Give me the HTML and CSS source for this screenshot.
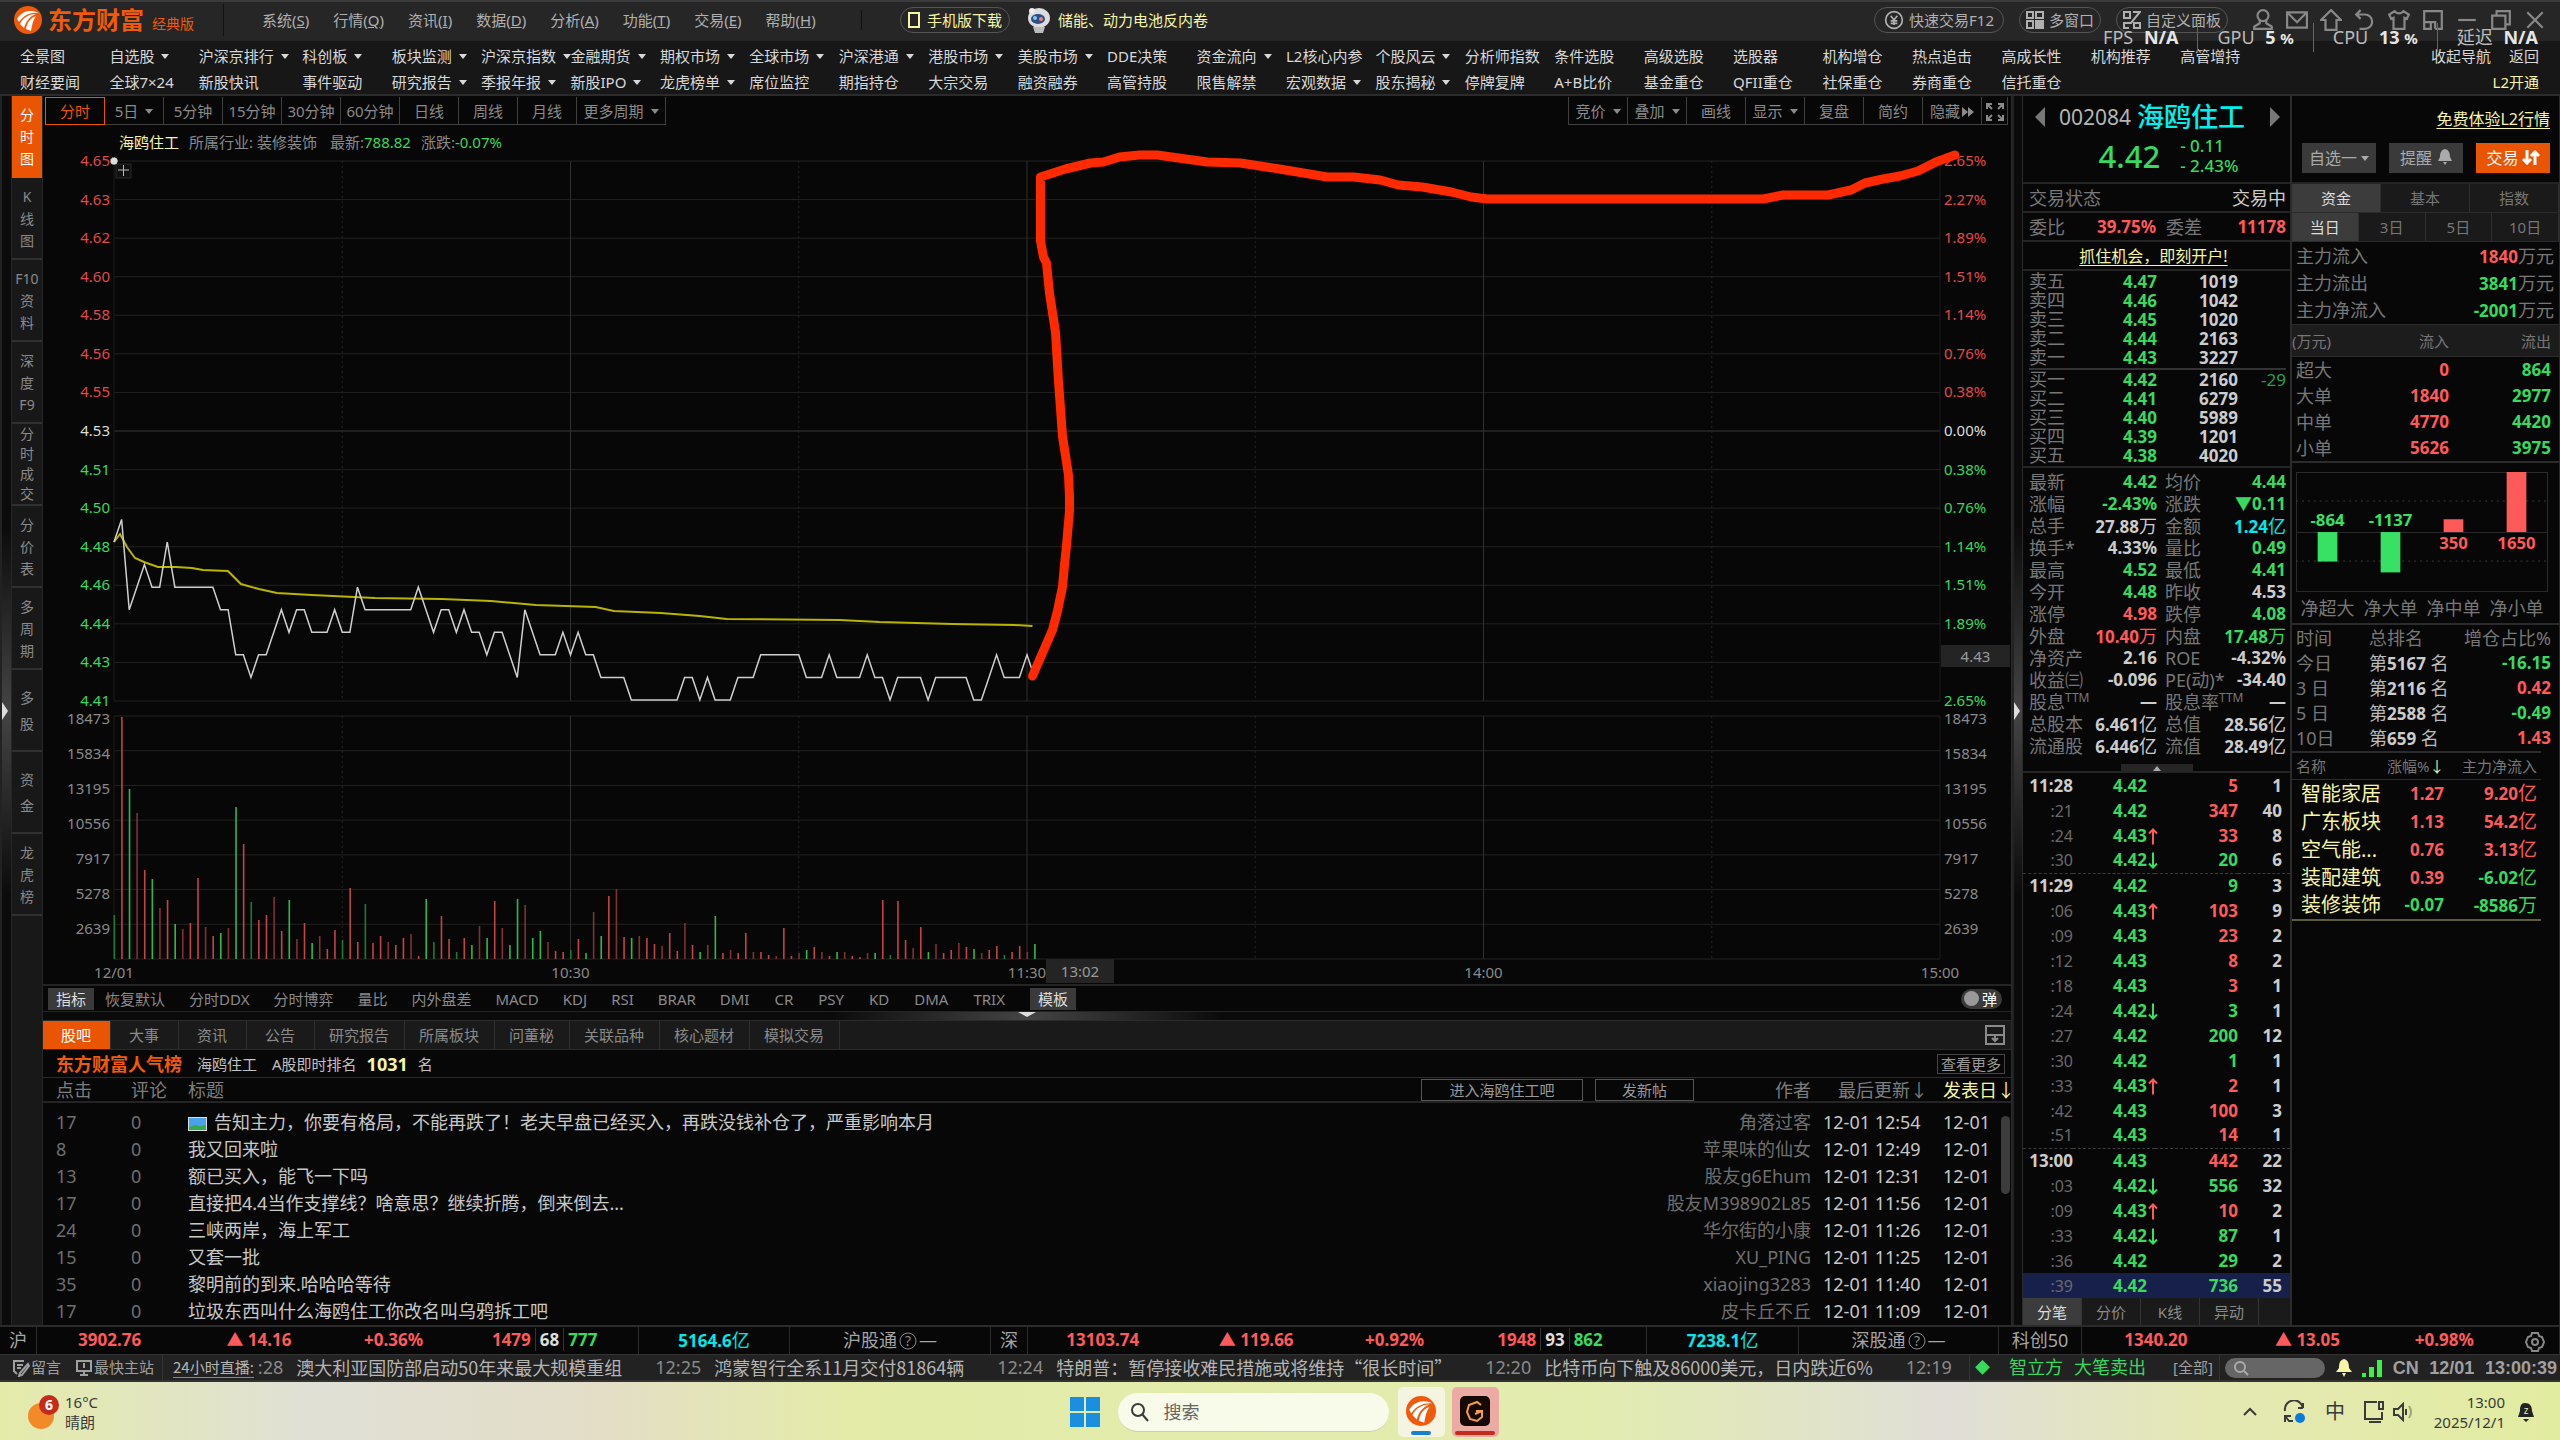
FILE: index.html
```html
<!DOCTYPE html>
<html lang="zh-CN">
<head>
<meta charset="utf-8">
<title>东方财富 经典版 - 海鸥住工 002084</title>
<link rel="stylesheet" href="styles.css">
</head>
<body>
<svg class="defs" aria-hidden="true">
  <symbol id="i-logo" viewBox="0 0 28 28"><circle cx="14" cy="14" r="14" fill="#f05a0a"/><path d="M3 13C8 5 16 3 25 7C17 6 10 9 5 16Z" fill="#fff"/><path d="M6 18C9 11 16 8 22 8C16 10 12 15 10 22Z" fill="#fff"/><path d="M12 23C13 17 16 12 22 10C19 14 18 19 17 25Z" fill="#fff"/></symbol>
  <symbol id="i-chat" viewBox="0 0 24 24"><circle cx="12" cy="12" r="10"/><path d="M8 7l4 5 4-5M12 12v6M8 13h8M8 16h8"/></symbol>
  <symbol id="i-up" viewBox="0 0 10 18"><path d="M5 17V2M1 6l4-4 4 4" fill="none" stroke="#ff5a5a" stroke-width="2"/></symbol>
  <symbol id="i-down" viewBox="0 0 10 18"><path d="M5 1v15M1 12l4 4 4-4" fill="none" stroke="#38e063" stroke-width="2"/></symbol>
</svg>
<div class="app">
  <header class="titlebar">
    <a class="brand" href="#"><svg width="28" height="28"><use href="#i-logo"/></svg><b>东方财富</b><span>经典版</span></a>
    <nav class="menus"><button>系统(<u>S</u>)</button><button>行情(<u>Q</u>)</button><button>资讯(<u>I</u>)</button><button>数据(<u>D</u>)</button><button>分析(<u>A</u>)</button><button>功能(<u>T</u>)</button><button>交易(<u>E</u>)</button><button>帮助(<u>H</u>)</button></nav>
    <button class="pill yellow"><svg width="12" height="16" viewBox="0 0 12 16"><rect x="1" y="1" width="10" height="14" fill="none" stroke="currentColor" stroke-width="2"/></svg>手机版下载</button>
    <a class="hot yellow" href="#"><svg width="26" height="26" viewBox="0 0 26 26"><ellipse cx="13" cy="11" rx="11" ry="10" fill="#dcdcdc"/><ellipse cx="12" cy="12" rx="7" ry="5" fill="#2b4f86"/><circle cx="9" cy="11" r="2" fill="#7cf"/><circle cx="15" cy="12" r="2" fill="#f77"/><path d="M7 20h12l-2 6H9z" fill="#bbb"/><circle cx="6" cy="4" r="3" fill="#eee"/></svg>储能、动力电池反内卷</a>
    <div class="tools">
      <button class="pill"><svg width="20" height="20" viewBox="0 0 24 24" class="ln"><use href="#i-chat"/></svg>快速交易F12</button>
      <button class="pill"><svg width="18" height="18" viewBox="0 0 18 18" class="ln"><rect x="1" y="1" width="6" height="6"/><rect x="10" y="1" width="7" height="6"/><rect x="1" y="10" width="6" height="7"/><rect x="10" y="10" width="7" height="7" fill="currentColor"/></svg>多窗口</button>
      <button class="pill"><svg width="18" height="18" viewBox="0 0 18 18" class="ln"><path d="M1 1h6v6H1zM10 1h7L8 12H1v5h5M11 12h6v5h-6z"/></svg>自定义面板</button>
    </div>
    <div class="winicons">
      <button aria-label="用户"><svg viewBox="0 0 20 20" class="ln"><circle cx="10" cy="6" r="5"/><path d="M7 10v3l-5 3v2h16v-2l-5-3v-3"/></svg></button>
      <button aria-label="邮件"><svg viewBox="0 0 20 20" class="ln"><path d="M1 3h18v14H1zM1 3l9 9 9-9"/></svg></button>
      <button aria-label="上移"><svg viewBox="0 0 20 20" class="ln"><path d="M10 1l9 9h-4v9H5v-9H1z"/></svg></button>
      <button aria-label="撤销"><svg viewBox="0 0 20 20" class="ln"><path d="M6 1L2 5l4 4M2 5h8a6 6 0 0 1 0 13H5"/></svg></button>
      <button aria-label="皮肤"><svg viewBox="0 0 20 20" class="ln"><path d="M6 2L1 5l2 4 2-1v10h10V8l2 1 2-4-5-3q-4 4-8 0z"/></svg></button>
      <button aria-label="小窗"><svg viewBox="0 0 20 20" class="ln"><path d="M2 12V2h16v16h-6M2 12v6h6v-6zM8 12h4v6"/></svg></button>
      <button aria-label="最小化"><svg viewBox="0 0 20 20" class="ln"><path d="M2 10h16"/></svg></button>
      <button aria-label="还原"><svg viewBox="0 0 20 20" class="ln"><path d="M2 6h12v12H2zM6 6V2h12v12h-4"/></svg></button>
      <button aria-label="关闭"><svg viewBox="0 0 20 20" class="ln"><path d="M3 3l14 14M17 3L3 17"/></svg></button>
    </div>
    <div class="perf"><span>FPS <b>N/A</b></span><span>GPU <b>5 <small>%</small></b></span><span>CPU <b>13 <small>%</small></b></span><span>延迟 <b>N/A</b></span></div>
  </header>

  <nav class="nav" id="nav"></nav>

  <main class="desk">
    <div class="vsplit left"></div>
    <nav class="rail"><button class="on">分<br>时<br>图</button><button>K<br>线<br>图</button><button>F10<br>资<br>料</button><button>深<br>度<br>F9</button><button class="four">分<br>时<br>成<br>交</button><button>分<br>价<br>表</button><button>多<br>周<br>期</button><button class="two">多<br>股</button><button class="two">资<br>金</button><button>龙<br>虎<br>榜</button></nav>

    <section class="center">
      <div class="chartbar">
        <div class="group"><button class="on">分时</button><button class="dd">5日</button><button>5分钟</button><button>15分钟</button><button>30分钟</button><button>60分钟</button><button>日线</button><button>周线</button><button>月线</button><button class="dd wide">更多周期</button></div>
        <div class="group"><button class="dd">竞价</button><button class="dd">叠加</button><button>画线</button><button class="dd">显示</button><button>复盘</button><button>简约</button><button>隐藏<svg width="12" height="10" viewBox="0 0 12 10"><path d="M0 0l6 5-6 5zM6 0l6 5-6 5z" fill="currentColor"/></svg></button><button class="sq" aria-label="全屏"><svg width="18" height="18" viewBox="0 0 18 18" class="ln"><path d="M1 6V1h5M12 1h5v5M17 12v5h-5M6 17H1v-5M1 1l5 5M17 1l-5 5M17 17l-5-5M1 17l5-5"/></svg></button></div>
      </div>
      <div class="chartinfo"><b class="yellow">海鸥住工</b><span>所属行业: 装修装饰</span><span class="n">最新:<i class="g">788.82</i></span><span>涨跌:<i class="g">-0.07%</i></span></div>
      <div class="chart">
        <div class="axis l" id="priceAxis"></div>
        <div class="plot price"><svg id="priceSvg" viewBox="0 0 1827 540" preserveAspectRatio="none"></svg></div>
        <div class="axis r" id="pctAxis"></div>
        <div class="axis l vol" id="volL"></div>
        <div class="plot volume"><svg id="volSvg" viewBox="0 0 1827 243" preserveAspectRatio="none"></svg></div>
        <div class="axis r vol" id="volR"></div>
        <div class="times"><span>12/01</span><span>10:30</span><span>11:30</span><span>14:00</span><span>15:00</span><mark>13:02</mark></div>
        <mark class="pricetag">4.43</mark>
      </div>
      <div class="indicators"><button class="on">指标</button><button>恢复默认</button><button>分时DDX</button><button>分时博弈</button><button>量比</button><button>内外盘差</button><button>MACD</button><button>KDJ</button><button>RSI</button><button>BRAR</button><button>DMI</button><button>CR</button><button>PSY</button><button>KD</button><button>DMA</button><button>TRIX</button><button class="on">模板</button><label class="toggle"><input type="checkbox">弹</label></div>
      <div class="hsplit"></div>
      <div class="tabs"><button class="on">股吧</button><button>大事</button><button>资讯</button><button>公告</button><button>研究报告</button><button>所属板块</button><button>问董秘</button><button>关联品种</button><button>核心题材</button><button>模拟交易</button>
        <svg class="dock ln" width="20" height="20" viewBox="0 0 20 20"><path d="M1 1h18v9H1zM1 10v9h18v-9M10 10v6M7 13l3 3 3-3"/></svg></div>
      <div class="rank"><b class="title">东方财富人气榜</b><span>海鸥住工</span><span>A股即时排名</span><b class="yellow num">1031</b><span>名</span><button>查看更多</button></div>
      <div class="posts">
        <table><colgroup><col class="c1"><col class="c2"><col><col class="c4"><col class="c5"><col class="c6"></colgroup>
          <thead><tr><th>点击</th><th>评论</th><th><div class="th3">标题<span><button class="enter">进入海鸥住工吧</button><button>发新帖</button></span></div></th><th class="a">作者</th><th>最后更新↓</th><th class="yellow">发表日↓</th></tr></thead>
          <tbody id="posts"></tbody></table>
        <div class="scroll"></div>
      </div>
    </section>

    <div class="vsplit right"></div>

    <section class="quote">
      <div class="qhead">
        <div class="name"><svg width="10" height="20" viewBox="0 0 10 20"><path d="M10 0v20L0 10z"/></svg><span>002084</span><b>海鸥住工</b><svg width="10" height="20" viewBox="0 0 10 20"><path d="M0 0v20l10-10z"/></svg></div>
        <div class="last"><b>4.42</b><span>- 0.11<br>- 2.43%</span></div>
      </div>
      <div class="kv line"><span>交易状态</span><span class="w">交易中</span></div>
      <div class="kv4 line"><span>委比</span><b class="r">39.75%</b><span>委差</span><b class="r">11178</b></div>
      <div class="ad"><a class="yellow" href="#">抓住机会，即刻开户!</a></div>
      <table class="book" id="sell"></table>
      <table class="book buy" id="buy"></table>
      <div class="stats" id="stats"></div>
      <div class="fold"><button aria-label="收起"></button></div>
      <table class="ticks" id="ticks"></table>
      <div class="qtabs"><button class="on">分笔</button><button>分价</button><button>K线</button><button>异动</button></div>
    </section>

    <section class="fund">
      <div class="fhead"><a class="yellow" href="#">免费体验L2行情</a>
        <div><button class="dd">自选一</button><button>提醒<svg width="14" height="16" viewBox="0 0 14 16"><path d="M7 0c4 1 5 4 5 8l2 4H0l2-4c0-4 1-7 5-8zM5 13h4l-2 3z" fill="currentColor"/></svg></button><button class="on">交易<svg width="18" height="15" viewBox="0 0 18 15"><path d="M5 0v13M1 9l4 4 4-4M13 15V2M9 6l4-4 4 4" fill="none" stroke="currentColor" stroke-width="3"/></svg></button></div></div>
      <div class="ftabs"><button class="on">资金</button><button>基本</button><button>指数</button></div>
      <div class="ftabs"><button class="on">当日</button><button>3日</button><button>5日</button><button>10日</button></div>
      <div class="flow"><div><span>主力流入</span><span><b class="r">1840</b>万元</span></div><div><span>主力流出</span><span><b class="g">3841</b>万元</span></div><div><span>主力净流入</span><span><b class="g">-2001</b>万元</span></div></div>
      <table class="orders"><thead><tr><th>(万元)</th><th>流入</th><th>流出</th></tr></thead>
        <tbody><tr><td>超大</td><td class="r">0</td><td class="g">864</td></tr><tr><td>大单</td><td class="r">1840</td><td class="g">2977</td></tr><tr><td>中单</td><td class="r">4770</td><td class="g">4420</td></tr><tr><td>小单</td><td class="r">5626</td><td class="g">3975</td></tr></tbody></table>
      <div class="net">
        <svg viewBox="0 0 256 122"><rect x=".5" y=".5" width="255" height="121" fill="none" stroke="#2c2c2c"/><path d="M0 61.500H256" stroke="#2c2c2c"/><path d="M0 29.500H256M0 90.500H256" stroke="#3a3a3a" stroke-dasharray="2 4"/>
          <g fill="#38e063"><rect x="22" y="61" width="20" height="30"/><rect x="86" y="61" width="20" height="41"/><text x="32" y="55">-864</text><text x="96" y="55">-1137</text></g>
          <g fill="#ff5a5a"><rect x="150" y="48" width="20" height="13"/><rect x="214" y="0" width="20" height="61"/><text x="160" y="78">350</text><text x="224" y="78">1650</text></g></svg>
        <div><span>净超大</span><span>净大单</span><span>净中单</span><span>净小单</span></div>
      </div>
      <table class="ranks"><thead><tr><th>时间</th><th>总排名</th><th>增仓占比%</th></tr></thead>
        <tbody><tr><td>今日</td><td>第<b>5167</b> 名</td><td class="g">-16.15</td></tr><tr><td>3 日</td><td>第<b>2116</b> 名</td><td class="r">0.42</td></tr><tr><td>5 日</td><td>第<b>2588</b> 名</td><td class="g">-0.49</td></tr><tr><td>10日</td><td>第<b>659</b> 名</td><td class="r">1.43</td></tr></tbody></table>
      <table class="sectors"><thead><tr><th>名称</th><th>涨幅%<span class="yellow">↓</span></th><th>主力净流入</th></tr></thead>
        <tbody><tr><td>智能家居</td><td class="r">1.27</td><td class="r">9.20<i>亿</i></td></tr><tr><td>广东板块</td><td class="r">1.13</td><td class="r">54.2<i>亿</i></td></tr><tr><td>空气能...</td><td class="r">0.76</td><td class="r">3.13<i>亿</i></td></tr><tr><td>装配建筑</td><td class="r">0.39</td><td class="g">-6.02<i>亿</i></td></tr><tr><td>装修装饰</td><td class="g">-0.07</td><td class="g">-8586<i>万</i></td></tr></tbody></table>
    </section>
  </main>

  <section class="indices">
    <div class="nm">沪</div>
    <div class="ix"><b>3902.76</b><b>▲ 14.16</b><b>+0.36%</b><b class="cnt"><i>1479</i><i class="w">68</i><i class="g">777</i></b></div>
    <div class="amt"><b>5164.6</b>亿</div>
    <div class="hk">沪股通<svg width="18" height="18" viewBox="0 0 18 18"><circle cx="9" cy="9" r="8"/><text x="9" y="14">?</text></svg>—</div>
    <div class="nm">深</div>
    <div class="ix"><b>13103.74</b><b>▲ 119.66</b><b>+0.92%</b><b class="cnt"><i>1948</i><i class="w">93</i><i class="g">862</i></b></div>
    <div class="amt"><b>7238.1</b>亿</div>
    <div class="hk">深股通<svg width="18" height="18" viewBox="0 0 18 18"><circle cx="9" cy="9" r="8"/><text x="9" y="14">?</text></svg>—</div>
    <div class="nm">科创50</div>
    <div class="ix"><b>1340.20</b><b>▲ 13.05</b><b>+0.98%</b><button aria-label="设置"><svg width="20" height="20" viewBox="0 0 20 20" class="ln"><path d="M7 1h6l1 3 3 1 2 5-2 5-3 1-1 3H7l-1-3-3-1-2-5 2-5 3-1z"/><circle cx="10" cy="10" r="3"/></svg></button></div>
  </section>

  <section class="news">
    <div class="links"><a href="#"><svg width="18" height="18" viewBox="0 0 18 18" class="ln"><path d="M12 2H2v10l3 3M5 6h6M5 9h4M16 5l-8 9-1 3 3-1 7-9z"/></svg>留言</a><a href="#"><svg width="18" height="18" viewBox="0 0 18 18" class="ln"><path d="M2 2h14v10H2zM9 12v4M5 16h8M9 4v5"/></svg>最快主站</a></div>
    <div class="feed"><a class="live" href="#">24小时直播:</a><time>:28</time><a href="#">澳大利亚国防部启动50年来最大规模重组</a><time>12:25</time><a href="#">鸿蒙智行全系11月交付81864辆</a><time>12:24</time><a href="#">特朗普：暂停接收难民措施或将维持“很长时间”</a><time>12:20</time><a href="#">比特币向下触及86000美元，日内跌近6%</a><time>12:19</time></div>
    <div class="alert"><i>◆</i><a href="#">智立方</a><a href="#">大笔卖出</a><a class="all" href="#">[全部]</a></div>
    <div class="status"><label><svg width="16" height="16" viewBox="0 0 16 16" class="ln"><circle cx="7" cy="7" r="5"/><path d="M11 11l4 4"/></svg><input type="text" aria-label="搜索"></label>
      <svg width="16" height="18" viewBox="0 0 16 18"><path d="M8 0c4 1 5 4 5 9l3 4H0l3-4c0-5 1-8 5-9zM6 14h4l-2 4z" fill="#f5f5a5"/></svg>
      <svg width="20" height="18" viewBox="0 0 20 18"><path d="M0 14h4v4H0zM7 8h5v10H7zM15 1h5v17h-5z" fill="#3cf04a"/></svg>
      <b>CN</b><b>12/01</b><b>13:00:39</b></div>
  </section>

  <footer class="taskbar">
    <button class="weather"><svg width="38" height="40" viewBox="0 0 38 40"><circle cx="14" cy="24" r="13" fill="#f28a2a"/><circle cx="22" cy="13" r="10" fill="#c42b1c"/><text x="22" y="18">6</text></svg><span>16°C<br>晴朗</span></button>
    <div class="apps">
      <button aria-label="开始"><svg width="30" height="30" viewBox="0 0 30 30" fill="#1a8fe0"><path d="M0 0h14v14H0zM16 0h14v14H16zM0 16h14v14H0zM16 16h14v14H16z"/></svg></button>
      <label class="find"><svg width="20" height="20" viewBox="0 0 20 20" class="ln"><circle cx="8" cy="8" r="6"/><path d="M12 12l6 7"/></svg><input type="text" placeholder="搜索" aria-label="搜索"></label>
      <button class="tile" aria-label="东方财富"><svg width="30" height="30"><use href="#i-logo"/></svg></button>
      <button class="tile red" aria-label="游戏加加"><svg width="30" height="30" viewBox="0 0 30 30"><rect width="30" height="30" rx="5" fill="#150805"/><path d="M21 9l-4-3-8 3-2 7 3 7 7 2 5-4v-6h-6M22 15l-7 3" fill="none" stroke="#f0a04a" stroke-width="2"/></svg></button>
    </div>
    <div class="tray">
      <svg width="14" height="10" viewBox="0 0 14 10" class="ln"><path d="M1 8l6-6 6 6"/></svg>
      <svg width="24" height="24" viewBox="0 0 24 24" class="ln"><path d="M2 11a9 9 0 0 1 18-3V3M20 8h-5M2 22v-6h6M2 16l4 5h4"/><circle cx="17" cy="18" r="5" fill="#0a7bd8" stroke="none"/></svg>
      <span class="ime">中</span>
      <svg width="22" height="24" viewBox="0 0 22 24" class="ln"><path d="M14 2H2v17h17v-7M6 22h12M16 2h4v7h-4z"/></svg>
      <svg width="22" height="20" viewBox="0 0 22 20" class="ln"><path d="M1 7v6h4l5 5V2L5 7zM13 7v6"/><path d="M16 4q4 6 0 12" opacity=".4"/></svg>
      <span class="clock">13:00<br>2025/12/1</span>
      <svg width="18" height="22" viewBox="0 0 18 22"><path d="M8 2c5 0 7 3 7 8l2 6H1l2-6c0-5 1-8 5-8zM6 18h6l-3 3z" fill="#222"/><text x="9" y="13" class="z">z</text></svg>
    </div>
  </footer>
</div>
<script src="app.js"></script>
</body>
</html>
```

FILE: styles.css
```css
* { box-sizing: border-box; }
body { margin: 0; background: #070707; color: #8a8a8a; font: 15px/20px "Noto Sans", "Noto Sans CJK SC", sans-serif; }
button { margin: 0; padding: 0; border: 0; background: none; color: inherit; font: inherit; white-space: nowrap; }
a { color: inherit; text-decoration: none; }
i { font-style: normal; }
table { border-collapse: collapse; border-spacing: 0; table-layout: fixed; width: 100%; }
td, th { padding: 0; font-weight: 400; text-align: left; white-space: nowrap; }
mark { background: #242424; color: #9a9a9a; }
.defs { display: none; }
.ln { fill: none; stroke: currentColor; stroke-width: 2; }
.yellow { color: #f5f5a5; }
.r { color: #ff5a5a; }
.g { color: #38d95f; }
.w { color: #ddd; }
.dd::after { content: ""; display: inline-block; border: 4px solid transparent; border-top: 5px solid currentColor; border-bottom: 0; margin-left: 7px; vertical-align: 3px; }
.app { display: flex; flex-direction: column; min-height: 100vh; overflow: hidden; }

/* title bar */
.titlebar { position: relative; display: flex; align-items: center; height: 41px; background: #262626; border-top: 2px solid #3a3a3a; padding: 0 14px 3px; color: #b0b0b0; }
.brand { display: flex; align-items: center; width: 210px; color: #f05a0a; border-right: 1px solid #111; line-height: 24px; }
.brand b { font-size: 24px; margin: 0 8px 0 6px; }
.brand span { font-size: 14px; padding-top: 8px; }
.menus { display: flex; gap: 24px; padding-left: 38px; width: 638px; border-right: 1px solid #111; }
.pill { display: flex; align-items: center; gap: 7px; height: 26px; padding: 0 10px; border: 1px solid #555; border-radius: 13px; }
.titlebar > .pill { margin-left: 38px; padding: 0 7px; }
.hot { display: flex; align-items: center; gap: 6px; margin-left: 16px; }
.tools { display: flex; gap: 15px; margin-left: auto; }
.tools .pill { padding: 0 6px; gap: 5px; }
.tools .pill:first-child { padding: 0 9px; }
.winicons { display: flex; gap: 12px; margin-left: 24px; }
.winicons svg { width: 22px; height: 22px; display: block; color: #888; }
.perf { position: absolute; right: 22px; top: 21px; display: flex; color: #bbb; font-size: 18px; line-height: 28px; }
.perf span + span { margin-left: 19px; padding-left: 19px; border-left: 1px solid #666; }
.perf b { color: #e6e6e6; margin-left: 6px; }
.perf small { font-size: 15px; }

/* navigation grid */
.nav { display: grid; grid-template-columns: 90fr 90fr 104fr repeat(22, 90fr) 271fr; height: 55px; background: #171717; border-bottom: 2px solid #2b2b2b; padding: 2px 21px 0 20px; color: #d8d8d8; }
.nav a { white-space: nowrap; line-height: 26px; min-width: 0; }
.nav .end { text-align: right; }
.nav .end i { margin-left: 18px; }

/* work area */
.desk { display: grid; grid-template-columns: 11px 32px minmax(0, 1fr) 10px 270px 268px; flex: 1; }
.vsplit { background: linear-gradient(#0b0b0b 35%, #444 50%, #0b0b0b 65%); border-left: 2px solid #222; display: flex; align-items: center; }
.vsplit::after { content: ""; border: 9px solid transparent; border-left: 6px solid #ddd; border-right: 0; }
.rail { background: #181818; border: solid #262626; border-width: 0 1px; }
.rail button { display: block; width: 100%; height: 82px; padding-top: 2px; border-bottom: 2px solid #303030; line-height: 22px; font-size: 14px; }
.rail .four { line-height: 20px; padding: 0; }
.rail .two { line-height: 26px; }
.rail .on { background: #ea5504; color: #fff; border-color: #ea5504; }

.center { display: flex; flex-direction: column; min-width: 0; border-right: 1px solid #2b2b2b; }
.chartbar { display: flex; justify-content: space-between; padding: 1px 3px 0 2px; height: 29px; }
.group { display: flex; height: 28px; }
.group button { width: 59px; border: solid #404040; border-width: 0 1px 1px 0; }
.group:last-child { border-left: 1px solid #404040; }
.group .on { width: 60px; border: 1px solid #ea5504; color: #ea5504; }
.group .wide { width: 89px; }
.group .sq { width: 26px; }
.group .sq svg { vertical-align: middle; margin: 0; }
.group svg { margin-left: 2px; }
.chartinfo { display: flex; gap: 10px; padding: 7px 0 0 76px; height: 36px; }
.chartinfo b { font-weight: 400; }
.chartinfo .n { margin-left: 3px; }
.chart { position: relative; display: grid; grid-template-columns: 71px minmax(0, 1fr) 71px; }
.plot svg { display: block; width: 100%; height: 100%; overflow: visible; }
.price { position: relative; z-index: 2; height: 540px; margin-bottom: 15px; }
.volume { height: 243px; }
.axis { display: flex; flex-direction: column; justify-content: space-between; height: 560px; margin-top: -11px; }
.axis.vol { height: 250px; justify-content: flex-start; gap: 15px; margin-top: -8px; }
.axis.l { text-align: right; padding-right: 4px; }
.axis.r { padding-left: 4px; color: inherit; }
.axis .r { color: #e04a4a; }
.times { grid-column: 1 / -1; position: relative; display: flex; justify-content: space-between; margin: 0 46px; height: 25px; line-height: 26px; }
.times span { width: 50px; text-align: center; }
.times mark { position: absolute; left: calc(50% + 19px); width: 68px; text-align: center; line-height: 24px; }
.pricetag { position: absolute; right: 1px; top: 484px; width: 69px; text-align: center; line-height: 22px; }
.indicators { display: flex; align-items: center; height: 28px; gap: 24px; padding: 0 9px 0 5px; border: solid #242424; border-width: 2px 0 1px; }
.indicators .on { background: #3a3a3a; color: #ddd; padding: 0 8px; line-height: 22px; }
.indicators .on:first-child { margin-right: -13px; }
.indicators button:nth-child(n+12) { margin-left: 1px; }
.toggle { display: flex; align-items: center; gap: 3px; margin-left: auto; height: 20px; padding: 0 5px 0 3px; border-radius: 10px; background: #3a3a3a; color: #fff; }
.toggle input { appearance: none; width: 15px; height: 15px; margin: 0; border-radius: 50%; background: #999; }
.hsplit { height: 8px; background: linear-gradient(90deg, #0a0a0a 40%, #444 50%, #0a0a0a 60%); display: flex; justify-content: center; }
.hsplit::after { content: ""; border: 9px solid transparent; border-top: 5px solid #ddd; border-bottom: 0; }
.tabs { display: flex; height: 30px; background: #1a1a1a; border: solid #2b2b2b; border-width: 1px 0; }
.tabs button { min-width: 68px; padding: 0 15px 0 14px; border-right: 1px solid #2e2e2e; }
.tabs .on { background: #ea5504; color: #fff; }
.dock { margin: 4px 6px 0 auto; }
.rank { display: flex; align-items: center; gap: 15px; height: 28px; padding: 0 6px 0 13px; border-bottom: 1px solid #2b2b2b; color: #c0c0c0; }
.rank .title { font-size: 18px; color: #f05a0a; }
.rank .num { font-size: 18px; margin: 0 -5px; }
.rank button { margin-left: auto; height: 20px; padding: 0 3px; border: 1px solid #444; line-height: 18px; color: #999; }
.posts { position: relative; flex: 1; font-size: 18px; line-height: 24px; }
.posts th { height: 24px; line-height: 22px; border-bottom: 2px solid #242424; color: #7d7d7d; }
.posts th.yellow { color: #f5f5a5; }
.posts td { height: 27px; color: #c8c8c8; overflow: hidden; }
.posts td:first-child, .posts th:first-child { padding-left: 13px; }
.posts tbody::before { content: ""; display: table-row; height: 6px; }
.posts td:nth-child(-n+2), .posts td.a { color: #6f6f6f; }
.posts .a { text-align: right; padding-right: 12px; }
.posts th:nth-child(5) { text-align: center; }
.c1 { width: 88px; }
.c2 { width: 57px; }
.c4 { width: 200px; }
.c5 { width: 120px; }
.c6 { width: 68px; }
.th3 { display: flex; justify-content: space-between; width: calc(100% + 71px); }
.th3 span { display: flex; gap: 12px; }
.th3 button { width: 99px; height: 22px; border: 1px solid #555; font-size: 15px; line-height: 18px; color: #999; }
.th3 .enter { width: 162px; }
.posts td svg { vertical-align: -2px; margin-right: 7px; }
.scroll { position: absolute; right: 1px; top: 38px; width: 9px; height: 78px; border-radius: 5px; background: #3c3c3c; }

/* quote column */
.quote { border: solid #2b2b2b; border-width: 0 2px 0 1px; font-size: 18px; line-height: 22px; min-width: 0; }
.qhead { height: 88px; border-bottom: 2px solid #242424; }
.name { display: flex; align-items: center; padding: 2px 10px 0 12px; height: 40px; line-height: 34px; fill: #777; }
.name span { font-size: 21px; color: #b5b5b5; margin: 0 6px 0 14px; }
.name b { font-size: 27px; color: #00f0f0; font-weight: 500; margin-right: auto; }
.last { display: flex; justify-content: center; gap: 20px; padding-left: 24px; color: #38d95f; }
.last b { font-size: 31px; line-height: 40px; font-weight: 500; }
.last span { font-size: 17px; line-height: 20px; font-weight: 500; }
.kv, .kv4, .ad { height: 29px; padding: 3px 4px 0 6px; border-bottom: 2px solid #242424; display: flex; justify-content: space-between; }
.kv4 { display: grid; grid-template-columns: 50px 77px 58px 1fr; }
.kv4 b, .book td, .ticks td { font-size: 17px; }
.kv4 b { text-align: right; }
.kv4 span:nth-child(3) { padding-left: 10px; }
.ad { justify-content: center; font-size: 16px; padding-right: 12px; }
.ad a { text-decoration: underline; text-underline-offset: 3px; }
.book { margin: 1px 4px 0 6px; width: calc(100% - 10px); }
.book.buy { border-top: 2px solid #333; margin-bottom: 1px; }
.book tr { height: 19px; line-height: 19px; }
.book td { text-align: right; font-weight: 700; color: #ccc; }
.book td:first-child { font-size: 18px; font-weight: 400; text-align: left; color: #777; width: 50px; }
.book td:nth-child(2) { color: #38d95f; width: 78px; }
.book td:nth-child(3) { width: 81px; }
.book td:last-child { width: auto; font-weight: 400; color: #2a9e48; }
.stats { border-top: 2px solid #242424; padding: 3px 4px 0 6px; display: grid; grid-template-columns: 128px 1fr; column-gap: 8px; }
.stats div { display: flex; justify-content: space-between; height: 22px; white-space: nowrap; }
.stats span, .kv span, .kv4 span { color: #777; }
.kv .w { color: #ccc; }
.stats b { font-size: 17px; color: #ccc; }
.stats b.r { color: #ff5a5a; }
.stats b.g { color: #38d95f; }
.stats b.c { color: #00e8f0; }
.stats b i { font-weight: 400; font-size: 18px; }
.stats sup { font-size: 12px; line-height: 0; }
.fold { height: 16px; padding-top: 7px; border-bottom: 2px solid #242424; display: flex; justify-content: center; }
.fold button { width: 72px; height: 7px; background: #262626; display: flex; justify-content: center; }
.fold button::after { content: ""; border: 4px solid transparent; border-bottom: 5px solid #aaa; border-top: 0; }
.ticks tr { height: 25px; line-height: 24px; }
.ticks td { text-align: right; font-weight: 700; }
.ticks td:nth-child(1) { width: 50px; font-weight: 400; color: #6a6a6a; font-size: 16px; }
.ticks td:nth-child(2) { width: 82px; color: #38d95f; padding-left: 40px; text-align: left; }
.ticks td:nth-child(3) { width: 83px; }
.ticks td:nth-child(4) { width: auto; color: #ccc; padding-right: 8px; }
.ticks .h td:first-child { font-weight: 700; color: #ccc; font-size: 17px; }
.ticks .h:not(:first-child) td { border-top: 1px dashed #3a3a3a; }
.ticks tr:last-child { background: #17204a; }
.ticks svg { width: 10px; height: 19px; margin-left: 1px; vertical-align: -4px; }
.qtabs { display: flex; height: 27px; background: #1a1a1a; font-size: 15px; }
.qtabs button { width: 59px; border-right: 1px solid #333; }
.qtabs .on, .ftabs .on { background: #3c3c3c; color: #ddd; }

/* capital flow column */
.fund { border-right: 1px solid #2b2b2b; font-size: 18px; line-height: 22px; min-width: 0; color: #777; }
.fhead { height: 88px; padding: 12px 9px 0 10px; display: flex; flex-direction: column; border-bottom: 2px solid #242424; font-size: 16px; }
.fhead a { align-self: flex-end; text-decoration: underline; text-underline-offset: 3px; }
.fhead div { display: flex; justify-content: space-between; margin-top: 13px; }
.fhead button { width: 74px; height: 30px; background: #3a3a3a; color: #aaa; }
.fhead .on { background: #ea5504; color: #fff; }
.fhead svg { margin-left: 6px; vertical-align: -1px; }
.fhead .on svg { margin-left: 3px; }
.fhead .dd::after { margin-left: 4px; }
.ftabs { display: flex; height: 29px; background: #1a1a1a; border-bottom: 1px solid #2b2b2b; font-size: 15px; }
.ftabs button { flex: 1; border-right: 1px solid #2e2e2e; }
.flow { height: 82px; padding: 1px 5px 0 4px; }
.flow div { display: flex; justify-content: space-between; line-height: 27px; }
.flow b, .fund td { font-size: 17px; }
.orders th { height: 32px; background: #1c1c1c; border: solid #2b2b2b; border-width: 1px 0; font-size: 15px; }
.orders td { height: 26px; font-weight: 700; }
.orders th, .orders td { text-align: right; }
.orders th:first-child, .orders td:first-child { text-align: left; font-weight: 400; width: 52px; padding-left: 4px; font-size: 18px; }
.orders th:first-child { padding-left: 0; font-size: 15px; }
.orders th:nth-child(2) { width: 105px; }
.orders th:nth-child(3), .orders td:nth-child(3) { padding-right: 8px; }
.net { border: solid #2b2b2b; border-width: 2px 0; padding: 9px 11px 0 4px; height: 164px; }
.net svg { display: block; width: 100%; }
.net text { font-size: 17px; font-weight: 700; text-anchor: middle; }
.net div { display: grid; grid-template-columns: repeat(4, 1fr); text-align: center; line-height: 33px; }
.ranks th { height: 26px; }
.ranks td { height: 25px; }
.ranks th:nth-child(1), .ranks td:nth-child(1) { width: 77px; padding-left: 4px; font-size: 18px; }
.ranks td:nth-child(2) { color: #bbb; font-size: 18px; }
.ranks b { font-size: 17px; color: #ccc; }
.ranks th:nth-child(3), .ranks td:nth-child(3) { text-align: right; padding-right: 8px; width: 106px; }
.ranks td:nth-child(3) { font-weight: 700; }
.sectors { width: calc(100% - 18px); border-top: 2px solid #2b2b2b; border-bottom: 2px solid #5c5c38; }
.sectors th { height: 28px; font-size: 15px; border-bottom: 1px solid #2b2b2b; text-align: right; }
.sectors td { height: 28px; text-align: right; font-weight: 700; }
.sectors th:first-child { text-align: left; width: 95px; padding-left: 4px; }
.sectors td:first-child { text-align: left; padding-left: 9px; font-size: 20px; color: #f5f5a5; font-weight: 400; }
.sectors th:nth-child(2) { width: 57px; }
.sectors th:last-child, .sectors td:last-child { padding-right: 4px; }
.sectors td i { font-weight: 400; font-size: 19px; }

/* index strip */
.indices { display: grid; grid-template-columns: 37fr 602fr 151fr 201fr 37fr 619fr 152fr 200fr 83fr 478fr; height: 29px; border-top: 2px solid #2b2b2b; font-size: 18px; line-height: 26px; }
.indices > div { border-right: 1px solid #2b2b2b; text-align: center; white-space: nowrap; }
.indices .nm, .indices .hk { color: #a5a5a5; }
.indices b { font-size: 17px; }
.ix { display: grid; grid-template-columns: 148fr 156fr 118fr 190fr; color: #ff5a5a; }
.ix:last-child { grid-template-columns: 148fr 156fr 118fr 56fr; }
.ix button { color: #888; padding: 3px 0 0 8px; line-height: 0; }
.cnt i + i { border-left: 1px solid #333; margin-left: 4px; padding-left: 4px; }
.amt { color: #00e8e8; }
.hk svg { vertical-align: -3px; margin: 0 2px; fill: none; stroke: #888; }
.hk text { font-size: 14px; text-anchor: middle; fill: #888; stroke: none; }

/* news strip */
.news { display: grid; grid-template-columns: 163px minmax(0, 1fr) 250px 340px; height: 28px; background: #222; border: solid #333; border-width: 1px 0 2px; color: #a0a0a0; line-height: 25px; }
.news > div { display: flex; align-items: center; white-space: nowrap; }
.links { gap: 14px; padding-left: 12px; border-right: 1px solid #333; }
.links a { display: flex; align-items: center; }
.links svg { margin-right: 1px; }
.feed { font-size: 18px; padding-left: 10px; color: #b5b5b5; overflow: hidden; border-right: 1px solid #333; }
.feed a { margin-right: 33px; font-family: "Noto Sans CJK SC", sans-serif; }
.feed time { color: #8a8a8a; margin-right: 13px; }
.feed .live { font-size: 15px; line-height: 20px; border-bottom: 1px solid #888; margin-right: 4px; }
.alert { color: #38d95f; font-size: 18px; gap: 11px; padding-left: 5px; border-right: 1px solid #333; }
.alert i { margin-right: 8px; font-size: 15px; }
.alert .all { font-size: 15px; color: #a0a0a0; margin-left: 16px; }
.status { padding: 0 3px 0 5px; justify-content: space-between; }
.status label { display: flex; align-items: center; width: 100px; height: 20px; border-radius: 10px; background: #666; padding-left: 8px; color: #aaa; }
.status input, .find input { min-width: 0; flex: 1; border: 0; background: none; font: inherit; outline: 0; }
.status b { font: 700 18px/24px "Liberation Sans", sans-serif; color: #a0a0a0; }

/* desktop taskbar */
.taskbar { display: grid; grid-template-columns: 1fr auto 1fr; align-items: center; height: 60px; background: linear-gradient(90deg, #e4eba9, #e0e0d6 12%, #e3ddc8 23%, #e4eba9 33%, #e2ecae 62%, #e0ded8 76%, #e4e8b4 86%, #e2eca0); color: #3a3a3a; }
.weather { display: flex; align-items: center; justify-self: start; padding-left: 27px; text-align: left; }
.weather text { font: 700 14px "Noto Sans", sans-serif; fill: #fff; text-anchor: middle; }
.apps { display: flex; align-items: center; padding-left: 8px; }
.apps > button:first-child { line-height: 0; margin-right: 18px; }
.find { display: flex; align-items: center; gap: 12px; width: 271px; height: 39px; border-radius: 20px; background: #f8faea; padding: 0 12px; font-size: 18px; margin-right: 9px; border-bottom: 1px solid #ccd0b0; }
.find input::placeholder { color: #666; opacity: 1; }
.tile { width: 47px; height: 50px; border-radius: 5px; background: #f4f4e0; margin-right: 7px; line-height: 0; display: grid; place-items: center; }
.tile::after { content: ""; width: 20px; height: 4px; border-radius: 2px; background: #1a7fd0; }
.tile svg { margin-top: 6px; }
.tile.red { background: #ecaaa4; margin-right: 0; }
.tile.red::after { width: 40px; background: #c42b1c; }
.tray { display: flex; align-items: center; justify-self: end; padding-right: 25px; }
.ime { font-size: 20px; margin: 0 18px; }
.tray svg:first-child { margin-right: 26px; }
.tray svg:nth-of-type(4) { margin-left: 8px; }
.clock { text-align: right; margin: 0 12px 0 12px; width: 78px; }
.z { font-size: 10px; fill: #e4e8b4; text-anchor: middle; }
```

FILE: app.js
```js
const $ = id => document.getElementById(id);

// Navigation: a trailing "v" marks an entry with a drop-down.
const navRows = [
  "全景图 自选股v 沪深京排行v 科创板v 板块监测v 沪深京指数v 金融期货v 期权市场v 全球市场v 沪深港通v 港股市场v 美股市场v DDE决策 资金流向v L2核心内参 个股风云v 分析师指数 条件选股 高级选股 选股器 机构增仓 热点追击 高成长性 机构推荐 高管增持",
  "财经要闻 全球7×24 新股快讯 事件驱动 研究报告v 季报年报v 新股IPOv 龙虎榜单v 席位监控 期指持仓 大宗交易 融资融券 高管持股 限售解禁 宏观数据v 股东揭秘v 停牌复牌 A+B比价 基金重仓 QFII重仓 社保重仓 券商重仓 信托重仓 - -"
];
const navEnds = ['<a class="end" href="#">收起导航<i>返回</i></a>', '<a class="end yellow" href="#">L2开通</a>'];
$("nav").innerHTML = navRows.map((row, i) => row.split(" ").map(t =>
  t === "-" ? "<span></span>" : t.endsWith("v") ? `<a class="dd" href="#">${t.slice(0, -1)}</a>` : `<a href="#">${t}</a>`
).join("") + navEnds[i]).join("");

// Axes
const tone = i => i < 7 ? "r" : i > 7 ? "g" : "w";
const prices = ["4.65","4.63","4.62","4.60","4.58","4.56","4.55","4.53","4.51","4.50","4.48","4.46","4.44","4.43","4.41"];
const pcts = ["2.65","2.27","1.89","1.51","1.14","0.76","0.38","0.00","0.38","0.76","1.14","1.51","1.89","2.27","2.65"];
$("priceAxis").innerHTML = prices.map((p, i) => `<span class="${tone(i)}">${p}</span>`).join("");
$("pctAxis").innerHTML = pcts.map((p, i) => `<span class="${tone(i)}">${p}%</span>`).join("");
const vols = [18473,15834,13195,10556,7917,5278,2639].map(v => `<span>${v}</span>`).join("");
$("volL").innerHTML = vols;
$("volR").innerHTML = vols;

function grid(rows, h) {
  let s = "";
  for (let i = 0; i <= rows; i++) s += `<path d="M0 ${h * i / rows}H1827" stroke="${i === 7 && rows === 14 ? "#383838" : "#222"}"/>`;
  for (let i = 0; i <= 8; i++) s += `<path d="M${1827 * i / 8} 0V${h}" stroke="${i % 2 ? "#262626" : i % 8 ? "#303030" : "#1c1c1c"}" ${i % 2 ? 'stroke-dasharray="2 3"' : ""}/>`;
  return s;
}

// Price line as "minute:price in cents over 400"
const line = "0:48 1:49 2:45 3:46 4:47 5:46 6:46 7:48 8:46 13:46 14:45 15:45 16:43 17:43 18:42 19:43 20:43 21:44 22:45 23:44 24:45 25:45 26:44 28:44 29:45 30:44 31:44 32:46 33:45 39:45 40:46 41:45 42:44 43:45 44:45 45:44 46:45 47:44 48:44 49:43 50:44 51:44 52:43 53:42 54:45 55:44 56:43 58:43 59:44 60:43 61:44 62:43 63:43 64:42 67:42 68:41 74:41 75:42 76:42 77:41 78:42 79:41 81:41 82:42 84:42 85:43 90:43 91:42 93:42 94:43 95:42 98:42 99:43 100:42 101:42 102:41 103:42 106:42 107:41 108:42 112:42 113:41 114:41 115:42 116:43 117:42 119:42 120:43 121:42";
const step = 1827 / 240;
const pts = line.split(" ").map(p => { const [m, c] = p.split(":"); return `${m * step},${381 + (48 - c) * 22.57}`; }).join(" ");
const avg = "0,381 6,373 13,386 21,397 30,401 44,406 62,406 78,407 89,409 114,410 127,423 145,428 163,432 198,434 261,437 328,438 377,440 422,444 482,446 500,450 547,452 586,455 613,458 726,459 766,461 839,463 901,464 919,465";
const pen = "919,515 929,492 939,469 944,450 949,426 951,404 953,385 956,350 956,335 955,314 949,275 945,220 942,171 936,132 933,102 930,96 927,80 927,16 952,8 977,2 990,1 1006,-4 1026,-6 1044,-6 1065,-3 1094,1 1127,2 1166,8 1214,16 1240,16 1267,19 1285,24 1309,26 1338,31 1358,36 1374,38 1650,38 1670,34 1715,34 1738,29 1752,22 1770,18 1787,15 1805,10 1823,1 1842,-6";
$("priceSvg").innerHTML = grid(14, 540) +
  `<g fill="none"><polyline points="${avg}" stroke="#b9b400" stroke-width="2"/><polyline points="${pts}" stroke="#cfcfcf" stroke-width="1.5"/>
  <polyline points="${pen}" stroke="#ff2a00" stroke-width="9" stroke-linecap="round" stroke-linejoin="round"/>
  <rect x="2" y="3" width="15" height="14" fill="#111" stroke="#2a2a2a"/><path d="M4 9H15M9.500 4V15" stroke="#bbb"/><circle cx="0" cy="0" r="3.500" fill="#ddd" stroke="#aaa" stroke-dasharray="1 1"/></g>`;

// Volume bars: pixel height per minute, "g" for falling minutes
const bars = "44g 242 170g 146 89 80g 51 59 35g 30 36 81 32 23 26g 31 152g 115 57g 39 44 62 28 59g 20 36 16g 23 10 29 19g 71 17 55g 16 23 17 14 21 25 3 60g 17g 43 20 7g 21 14g 33 21g 58 31 14g 60g 54 21g 28g 17 8 7 9g 20 6g 47 23g 63 70 22 21g 23 21 15 13 26 8 36 14 7g 14 43g 6 9 6 26 7 7 4 3 31 3 6 9g 12 7 3 7g 7 3 2 6 6g 59 4g 58 19 11 32 7g 15 6 9 16 12 10g 6 9 13 4g 7 13 7 15g";
$("volSvg").innerHTML = grid(7, 243) + bars.split(" ").map((b, i) => {
  const fill = b.endsWith("g") ? (i % 3 ? "#2fb850" : "#1d7a35") : (i % 3 ? "#c24444" : "#823030");
  const h = parseInt(b, 10);
  return `<rect x="${i * step - 0.5}" y="${243 - h}" width="1.6" height="${h}" fill="${fill}"/>`;
}).join("");

// Forum posts
const pic = '<svg width="19" height="14" viewBox="0 0 19 14"><path d="M0 0h19v14H0z" fill="#ddd"/><path d="M1 1h17v9H1z" fill="#4aa3e8"/><path d="M1 10l6-2 5 1 6-1v5H1z" fill="#35a853"/></svg>';
$("posts").innerHTML = [
  [17, pic + "告知主力，你要有格局，不能再跌了！老夫早盘已经买入，再跌没钱补仓了，严重影响本月", "角落过客", "12:54"],
  [8, "我又回来啦", "苹果味的仙女", "12:49"],
  [13, "额已买入，能飞一下吗", "股友g6Ehum", "12:31"],
  [17, "直接把4.4当作支撑线？啥意思？继续折腾，倒来倒去...", "股友M398902L85", "11:56"],
  [24, "三峡两岸，海上军工", "华尔街的小康", "11:26"],
  [15, "又套一批", "XU_PING", "11:25"],
  [35, "黎明前的到来.哈哈哈等待", "xiaojing3283", "11:40"],
  [17, "垃圾东西叫什么海鸥住工你改名叫乌鸦拆工吧", "皮卡丘不丘", "11:09"]
].map(p => `<tr><td>${p[0]}</td><td>0</td><td>${p[1]}</td><td class="a">${p[2]}</td><td>12-01 ${p[3]}</td><td>12-01</td></tr>`).join("");

// Order book
const book = rows => rows.map(r => `<tr><td>${r[0]}</td><td>${r[1]}</td><td>${r[2]}</td><td>${r[3] || ""}</td></tr>`).join("");
$("sell").innerHTML = book([["卖五","4.47",1019],["卖四","4.46",1042],["卖三","4.45",1020],["卖二","4.44",2163],["卖一","4.43",3227]]);
$("buy").innerHTML = book([["买一","4.42",2160,"-29"],["买二","4.41",6279],["买三","4.40",5989],["买四","4.39",1201],["买五","4.38",4020]]);

$("stats").innerHTML = [
  ["最新","4.42","g"],["均价","4.44","g"],["涨幅","-2.43%","g"],["涨跌","▼0.11","g"],
  ["总手","27.88<i>万</i>",""],["金额","1.24<i>亿</i>","c"],["换手*","4.33%",""],["量比","0.49","g"],
  ["最高","4.52","g"],["最低","4.41","g"],["今开","4.48","g"],["昨收","4.53",""],
  ["涨停","4.98","r"],["跌停","4.08","g"],["外盘","10.40<i>万</i>","r"],["内盘","17.48<i>万</i>","g"],
  ["净资产","2.16",""],["ROE","-4.32%",""],["收益㈢","-0.096",""],["PE(动)*","-34.40",""],
  ["股息<sup>TTM</sup>","—",""],["股息率<sup>TTM</sup>","—",""],["总股本","6.461<i>亿</i>",""],["总值","28.56<i>亿</i>",""],
  ["流通股","6.446<i>亿</i>",""],["流值","28.49<i>亿</i>",""]
].map(s => `<div><span>${s[0]}</span><b class="${s[2]}">${s[1]}</b></div>`).join("");

// Tick list: time, price, arrow, volume, side, count
$("ticks").innerHTML = [
  ["11:28","4.42","",5,"r",1],[":21","4.42","",347,"r",40],[":24","4.43","up",33,"r",8],[":30","4.42","down",20,"g",6],
  ["11:29","4.42","",9,"g",3],[":06","4.43","up",103,"r",9],[":09","4.43","",23,"r",2],[":12","4.43","",8,"r",2],
  [":18","4.43","",3,"r",1],[":24","4.42","down",3,"g",1],[":27","4.42","",200,"g",12],[":30","4.42","",1,"g",1],
  [":33","4.43","up",2,"r",1],[":42","4.43","",100,"r",3],[":51","4.43","",14,"r",1],["13:00","4.43","",442,"r",22],
  [":03","4.42","down",556,"g",32],[":09","4.43","up",10,"r",2],[":33","4.42","down",87,"g",1],[":36","4.42","",29,"g",2],
  [":39","4.42","",736,"g",55]
].map(t => `<tr class="${t[0].length > 3 ? "h" : ""}"><td>${t[0]}</td><td>${t[1]}${t[2] ? `<svg><use href="#i-${t[2]}"/></svg>` : ""}</td><td class="${t[4]}">${t[3]}</td><td>${t[5]}</td></tr>`).join("");
```
